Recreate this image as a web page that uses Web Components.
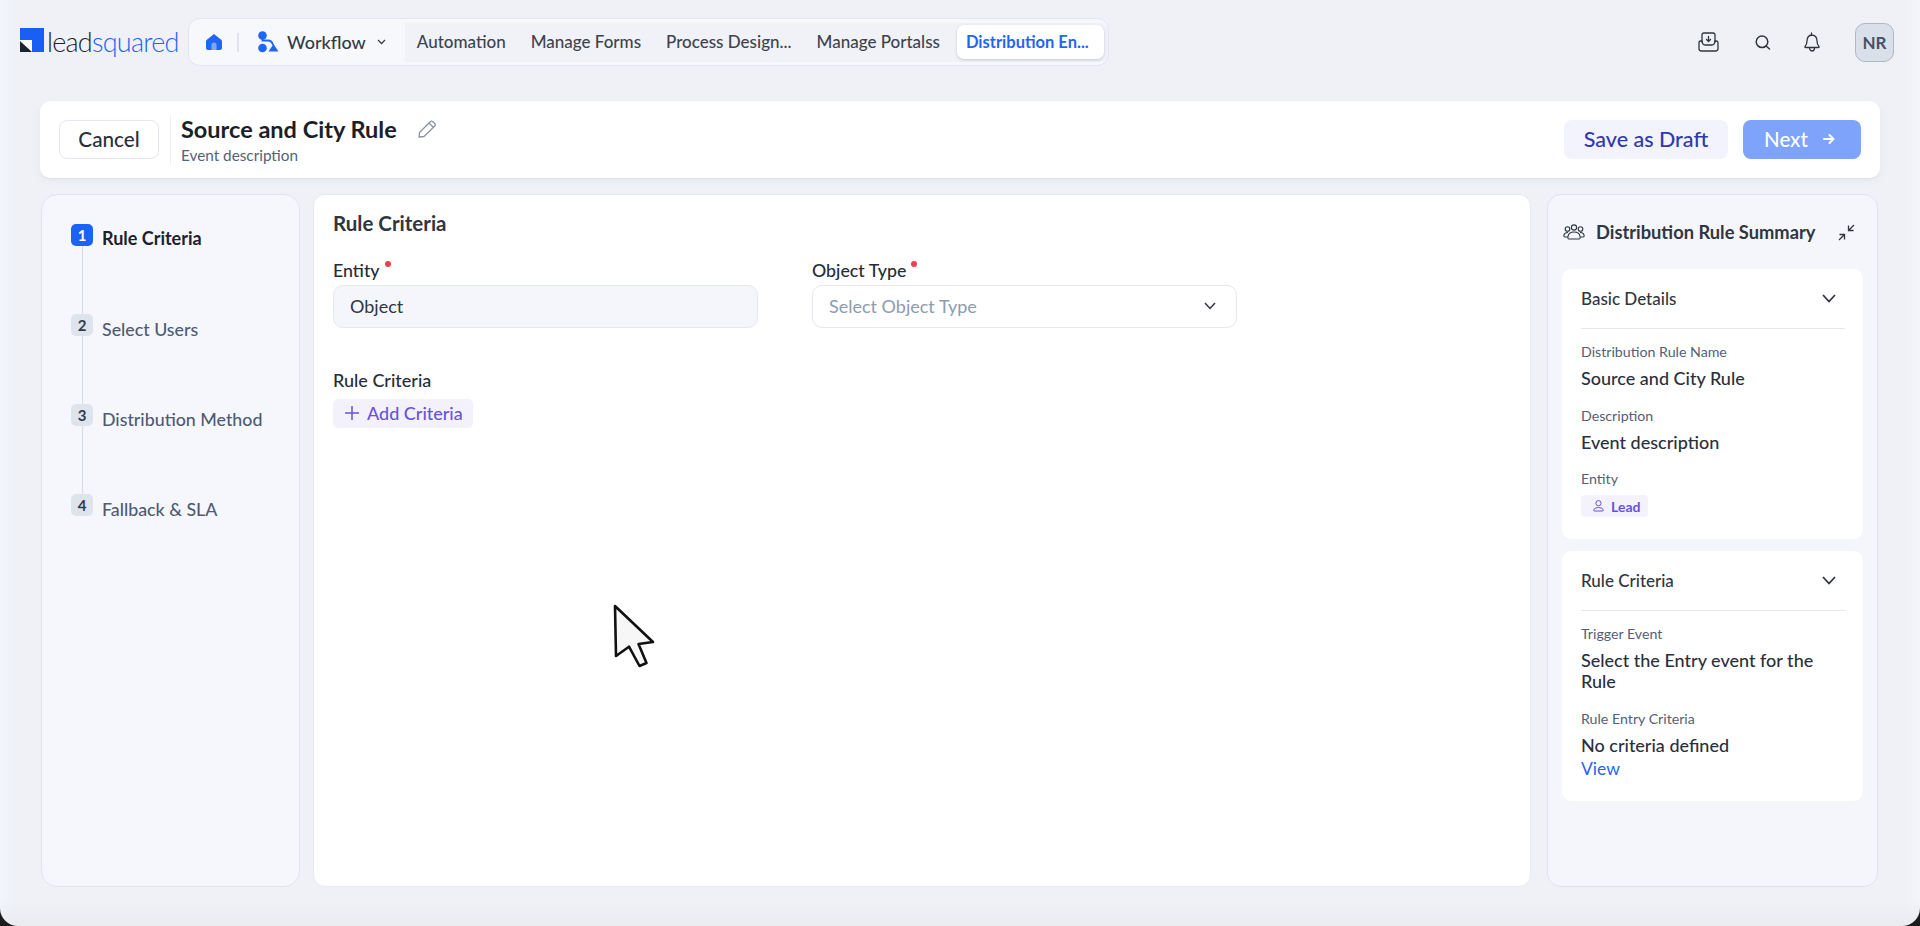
<!DOCTYPE html>
<html>
<head>
<meta charset="utf-8">
<title>Source and City Rule</title>
<style>
    html, body { margin: 0; padding: 0; background: #1c1c1e; }
    body { font-family: Lato, "Open Sans", sans-serif; width: 1920px; height: 926px; overflow: hidden; }
</style>
</head>
<body>
<ls-app>
    <ls-topbar slot="top">
        <ls-nav-tab>Automation</ls-nav-tab>
        <ls-nav-tab>Manage Forms</ls-nav-tab>
        <ls-nav-tab>Process Design...</ls-nav-tab>
        <ls-nav-tab>Manage Portalss</ls-nav-tab>
        <ls-nav-tab active>Distribution En...</ls-nav-tab>
    </ls-topbar>
    <ls-actionbar slot="top" name="Source and City Rule" description="Event description"></ls-actionbar>

    <ls-stepper>
        <ls-step number="1" active>Rule Criteria</ls-step>
        <ls-step number="2">Select Users</ls-step>
        <ls-step number="3">Distribution Method</ls-step>
        <ls-step number="4" last>Fallback &amp; SLA</ls-step>
    </ls-stepper>

    <ls-form-panel></ls-form-panel>

    <ls-summary>
        <ls-summary-card heading="Basic Details">
            <ls-detail label="Distribution Rule Name">Source and City Rule</ls-detail>
            <ls-detail label="Description">Event description</ls-detail>
            <ls-detail label="Entity"><ls-chip>Lead</ls-chip></ls-detail>
        </ls-summary-card>
        <ls-summary-card heading="Rule Criteria">
            <ls-detail label="Trigger Event">Select the Entry event for the Rule</ls-detail>
            <ls-detail label="Rule Entry Criteria" link="View">No criteria defined</ls-detail>
        </ls-summary-card>
    </ls-summary>
</ls-app>

<script>
const html = (source) => {
    const template = document.createElement("template");
    template.innerHTML = source;
    return template;
};

class Base extends HTMLElement {
    constructor() {
        super();
        this.attachShadow({ mode: "open" });
        this.shadowRoot.appendChild(this.constructor.template.content.cloneNode(true));
    }
}

class App extends Base {
    static template = html(`
        <style>
            :host {
                display: flex;
                flex-direction: column;
                width: 1920px;
                height: 926px;
                box-sizing: border-box;
                padding-bottom: 39px;
                border-radius: 0 0 18px 18px;
                overflow: hidden;
                position: relative;
                color: #2f3640;
                background:
                    linear-gradient(0deg, #ebecf0 0, rgba(238,240,245,0) 26px),
                    linear-gradient(90deg, #f2f5fe 0, rgba(242,245,254,0) 16px),
                    linear-gradient(270deg, #f3f5fb 0, rgba(243,245,251,0) 16px),
                    #eff1f7;
            }
            .work {
                flex: 1;
                min-height: 0;
                display: grid;
                grid-template-columns: 259px 1218px 331px;
                column-gap: 13px;
                padding: 16px 0 0 41px;
            }
            ::slotted(ls-summary) { margin-left: 3px; width: 331px; }
            svg { position: absolute; left: 612px; top: 603px; }
        </style>
        <slot name="top"></slot>
        <div class="work"><slot></slot></div>
        <svg width="46" height="66" viewBox="0 0 46 66">
            <path d="M3 3 L41 39 L26.500 41 L34.500 60 L27.500 63 L17 43.700 L4 53 Z" fill="#f7f7f7" stroke="#111" stroke-width="2.600" stroke-linejoin="round"/>
        </svg>
    `);
}

class Topbar extends Base {
    static template = html(`
        <style>
            :host {
                display: flex;
                align-items: center;
                height: 48px;
                padding: 18px 26px 0 20px;
            }
            .logo { display: flex; align-items: center; gap: 3px; width: 168px; }
            .logo svg { margin-bottom: 4px; }
            .word {
                font-size: 27px;
                font-weight: 300;
                line-height: 30px;
                letter-spacing: -0.75px;
                color: #1f2430;
                margin-top: -1px;
            }
            .word b { font-weight: 300; color: #1f66f2; }
            nav {
                display: flex;
                align-items: center;
                box-sizing: border-box;
                width: 921px;
                height: 48px;
                padding-left: 17px;
                background: #f7f8fc;
                border: 1px solid #e3e5f0;
                border-radius: 12px;
            }
            .sep { width: 2px; height: 19px; background: #e1e4ec; margin: 0 19px 0 15px; }
            .flow { font-size: 18px; font-weight: 500; color: #343a46; margin: 0 11px 0 8px; }
            .tabs {
                display: flex;
                align-items: center;
                height: 39px;
                margin-left: 19px;
                flex: 1;
                background: #f1f2f7;
                border-radius: 0 8px 8px 0;
            }
            .right { margin-left: auto; display: flex; align-items: center; }
            .avatar {
                box-sizing: border-box;
                width: 39px;
                height: 39px;
                margin-left: 35px;
                display: flex;
                align-items: center;
                justify-content: center;
                background: #d9e0e9;
                border: 1px solid #aeb8c6;
                border-radius: 10px;
                font-size: 17px;
                font-weight: 700;
                color: #475266;
            }
            .right svg { display: block; }
        </style>
        <div class="logo">
            <svg width="24" height="24" viewBox="0 0 24 24">
                <rect width="24" height="24" fill="#1a5ff5"/>
                <rect x="0" y="12" width="12" height="12" fill="#fff"/>
                <path d="M0 13 L12 24 H0 Z" fill="#1c2230"/>
            </svg>
            <span class="word">lead<b>squared</b></span>
        </div>
        <nav>
            <svg width="16" height="16" viewBox="0 0 16 16">
                <path d="M8 0 L15.500 6 Q16 6.500 16 7.500 V14 Q16 16 14 16 H2 Q0 16 0 14 V7.500 Q0 6.500 .5 6 Z" fill="#1f66f2"/>
                <path d="M5.500 16 V10.500 Q5.500 8.500 8 8.500 Q10.500 8.500 10.500 10.500 V16 Z" fill="#7da6f8"/>
            </svg>
            <span class="sep"></span>
            <svg width="21" height="22" viewBox="0 0 21 22">
                <circle cx="4.500" cy="4.500" r="4.300" fill="#1f66f2"/>
                <circle cx="4.500" cy="17" r="4.300" fill="#1f66f2"/>
                <path d="M4.500 5 V9.500 H10 Q14 9.500 15 14" fill="none" stroke="#1f66f2" stroke-width="1.800"/>
                <path d="M15.500 13 L20.500 20.500 H10.500 Z" fill="#1f66f2"/>
            </svg>
            <span class="flow">Workflow</span>
            <svg width="9" height="6" viewBox="0 0 9 6"><path d="M1 1 L4.500 4.500 L8 1" fill="none" stroke="#3a404c" stroke-width="1.300"/></svg>
            <div class="tabs"><slot></slot></div>
        </nav>
        <div class="right">
            <svg width="21" height="20" viewBox="0 0 21 20" fill="none" stroke="#2f3640" stroke-width="1.300" stroke-linejoin="round" stroke-linecap="round">
                <path d="M4 10 V3 Q4 1 6 1 H15 Q17 1 17 3 V10"/>
                <path d="M4 9 H2.500 Q1 9 1 11 V16.500 Q1 19 3.500 19 H17.500 Q20 19 20 16.500 V11 Q20 9 18.500 9 H17 Q16.500 13 14 13 H7 Q4.500 13 4 9 Z"/>
                <path d="M10.500 4.500 V9 M8.500 7.500 L10.500 9.500 L12.500 7.500"/>
            </svg>
            <svg style="margin-left:36px" width="16" height="15" viewBox="0 0 16 15" fill="none" stroke="#2f3640" stroke-width="1.500" stroke-linecap="round">
                <circle cx="7" cy="6.800" r="5.800"/><path d="M11.200 11 L14.500 14"/>
            </svg>
            <svg style="margin-left:33px" width="16" height="20" viewBox="0 0 16 20" fill="none" stroke="#2f3640" stroke-width="1.300" stroke-linejoin="round" stroke-linecap="round">
                <path d="M7.500 1 V3 M8 3 Q3 3.500 3 9 Q3 12.500 1 14.500 Q.5 15.500 2 15.500 H14 Q15.500 15.500 15 14.500 Q13 12.500 13 9 Q13 3.500 8 3 Z"/>
                <path d="M5.500 16 Q6 19 8 19 Q10.500 19 10.500 16"/>
            </svg>
            <div class="avatar">NR</div>
        </div>
    `);
}

class NavTab extends Base {
    static template = html(`
        <style>
            :host {
                display: block;
                height: 34px;
                line-height: 34px;
                padding: 0 13px 0 12px;
                font-size: 17px;
                font-weight: 500;
                color: #3d434f;
                white-space: nowrap;
            }
            :host([active]) {
                margin-left: 4px;
                padding: 0 15px 0 9px;
                background: #fff;
                border-radius: 7px;
                box-shadow: 0 1px 3px rgba(40,50,80,.22);
                color: #1f66f2;
                font-size: 16.500px;
                font-weight: 700;
            }
        </style>
        <slot></slot>
    `);
}

class Actionbar extends Base {
    static template = html(`
        <style>
            :host {
                display: flex;
                align-items: center;
                box-sizing: border-box;
                height: 77px;
                margin: 35px 40px 0;
                padding: 0 19px;
                background: #fff;
                border-radius: 10px;
                box-shadow: 0 1px 1px #dfe2ea, 0 3px 8px rgba(60,70,100,.05);
            }
            button {
                font: inherit;
                box-sizing: border-box;
                height: 39px;
                border-radius: 8px;
                border: 0;
                font-size: 21.500px;
                font-weight: 500;
                padding: 0 0 2px;
            }
            .cancel { width: 100px; background: #fff; border: 1px solid #e4e6ee; color: #2a303c; font-size: 20.700px; }
            .sep { width: 1px; height: 50px; background: #eceef3; margin: 0 10px 0 11px; }
            .title { display: flex; flex-direction: column; padding-top: 1px; }
            .name { display: flex; align-items: center; font-size: 23.500px; font-weight: 700; line-height: 26px; color: #1b1f28; }
            .name svg { margin-left: 21px; }
            .desc { font-size: 15.300px; line-height: 18px; color: #566278; margin-top: 4px; }
            .save { width: 164px; margin-left: auto; background: #f2f3fc; color: #3038b0; }
            .next {
                width: 118px;
                margin-left: 15px;
                padding-left: 21px;
                background: #7da3fb;
                color: #fff;
                font-size: 20.500px;
                display: flex;
                align-items: center;
                gap: 15px;
            }
        </style>
        <button class="cancel">Cancel</button>
        <span class="sep"></span>
        <div class="title">
            <div class="name"><span id="name"></span>
                <svg width="19" height="18" viewBox="0 0 19 18" fill="none" stroke="#8b93a3" stroke-width="1.300" stroke-linejoin="round">
                    <path d="M1.500 12.500 L12.500 1.500 Q13.500 .8 14.500 1.500 L17 3.800 Q17.800 4.800 17 5.800 L6 16.500 L1 17 Z"/>
                    <path d="M11 3 L15.500 7.500"/>
                </svg>
            </div>
            <div class="desc" id="desc"></div>
        </div>
        <button class="save">Save as Draft</button>
        <button class="next">Next
            <svg width="12" height="12" viewBox="0 0 12 12" fill="none" stroke="#fff" stroke-width="2" stroke-linecap="round" stroke-linejoin="round"><path d="M1 6 H10.500 M6.500 2 L10.500 6 L6.500 10"/></svg>
        </button>
    `);

    connectedCallback() {
        this.shadowRoot.querySelector("#name").textContent = this.getAttribute("name");
        this.shadowRoot.querySelector("#desc").textContent = this.getAttribute("description");
    }
}

class Stepper extends Base {
    static template = html(`
        <style>
            :host {
                display: block;
                box-sizing: border-box;
                padding: 29px 0 0 29px;
                background: #f6f7fc;
                border: 1px solid #dfe4ee;
                border-radius: 16px;
            }
        </style>
        <slot></slot>
    `);
}

class Step extends Base {
    static template = html(`
        <style>
            :host { display: flex; height: 90px; gap: 9px; }
            .rail { width: 22px; display: flex; flex-direction: column; align-items: center; }
            .badge {
                flex: none;
                width: 22px;
                height: 22px;
                border-radius: 5px;
                display: flex;
                align-items: center;
                justify-content: center;
                background: #dde4ec;
                color: #343b48;
                font-size: 15px;
                font-weight: 700;
            }
            .line { flex: 1; width: 1px; background: #d6dce5; }
            .label { margin-top: 3px; line-height: 24px; font-size: 17.800px; font-weight: 500; color: #4f5b72; white-space: nowrap; }
            :host([active]) .badge { background: #1a63f6; color: #fff; }
            :host([active]) .label { font-weight: 700; font-size: 18px; color: #1c212b; margin-top: 2px; }
            :host([last]) .line { display: none; }
        </style>
        <div class="rail"><div class="badge" id="n"></div><div class="line"></div></div>
        <div class="label"><slot></slot></div>
    `);

    connectedCallback() {
        this.shadowRoot.querySelector("#n").textContent = this.getAttribute("number");
    }
}

class FormPanel extends Base {
    static template = html(`
        <style>
            :host {
                display: block;
                box-sizing: border-box;
                padding: 16px 19px;
                background: #fff;
                border: 1px solid #e6e9f1;
                border-radius: 12px;
            }
            h2 { margin: 0 0 24px; font-size: 20.500px; line-height: 24px; font-weight: 700; color: #2f3640; }
            .row { display: flex; gap: 54px; }
            .gap { height: 41px; }
            .label { font-size: 18px; line-height: 22px; font-weight: 500; color: #262c37; }
            .add {
                display: flex;
                align-items: center;
                gap: 8px;
                box-sizing: border-box;
                width: 140px;
                height: 29px;
                margin-top: 8px;
                padding: 0 0 2px 12px;
                background: #f3f2fc;
                border-radius: 5px;
                color: #6a52d8;
                font-size: 18px;
                font-weight: 500;
            }
        </style>
        <h2>Rule Criteria</h2>
        <div class="row">
            <ls-field label="Entity" value="Object" disabled></ls-field>
            <ls-field label="Object Type" placeholder="Select Object Type"></ls-field>
        </div>
        <div class="gap"></div>
        <div class="label">Rule Criteria</div>
        <div class="add">
            <svg width="14" height="14" viewBox="0 0 14 14" stroke="#6a52d8" stroke-width="1.500"><path d="M7 0 V14 M0 7 H14"/></svg>
            Add Criteria
        </div>
    `);
}

class Field extends Base {
    static template = html(`
        <style>
            :host { display: block; width: 425px; }
            .label { display: flex; font-size: 17.800px; line-height: 22px; font-weight: 500; color: #262c37; margin-bottom: 4px; }
            .dot { width: 6px; height: 6px; margin: 2px 0 0 5px; border-radius: 50%; background: #ef3f4f; }
            .box {
                display: flex;
                align-items: center;
                justify-content: space-between;
                box-sizing: border-box;
                height: 43px;
                padding: 0 20px 2px 16px;
                background: #fff;
                border: 1px solid #e5e7ef;
                border-radius: 10px;
                font-size: 18px;
                color: #8e9bb0;
            }
            :host([disabled]) .box { background: #f5f6fb; color: #2f3640; }
            :host([disabled]) svg { display: none; }
        </style>
        <div class="label"><span id="l"></span><span class="dot"></span></div>
        <div class="box"><span id="v"></span>
            <svg width="12" height="8" viewBox="0 0 12 8" fill="none" stroke="#2f3640" stroke-width="1.500"><path d="M1 1 L6 6.500 L11 1"/></svg>
        </div>
    `);

    connectedCallback() {
        this.shadowRoot.querySelector("#l").textContent = this.getAttribute("label");
        this.shadowRoot.querySelector("#v").textContent = this.getAttribute("value") || this.getAttribute("placeholder");
    }
}

class Summary extends Base {
    static template = html(`
        <style>
            :host {
                display: block;
                box-sizing: border-box;
                padding: 25px 14px 0;
                background: #f5f6fb;
                border: 1px solid #dfe3ec;
                border-radius: 14px;
            }
            header { display: flex; align-items: center; height: 24px; margin: 0 8px 25px 1px; font-size: 18.300px; font-weight: 700; color: #2f3640; }
            header span { margin-left: 11px; flex: 1; white-space: nowrap; }
        </style>
        <header>
            <svg width="22" height="16" viewBox="0 0 22 16" fill="none" stroke="#2f3640" stroke-width="1.100" stroke-linejoin="round">
                <circle cx="11" cy="3.500" r="2.600"/><circle cx="4.500" cy="5" r="2.300"/><circle cx="17.500" cy="5" r="2.300"/>
                <path d="M6 15 H16 Q17.500 15 17 12.500 Q16.500 8 11 8 Q5.500 8 5 12.500 Q4.500 15 6 15 Z"/>
                <path d="M5 13 H2 Q.5 13 1 11 Q1.500 8.500 5 8.500 M17 13 H20 Q21.500 13 21 11 Q20.500 8.500 17 8.500"/>
            </svg>
            <span>Distribution Rule Summary</span>
            <svg width="17" height="17" viewBox="0 0 17 17" fill="none" stroke="#2f3640" stroke-width="1.300">
                <path d="M16 1 L10.500 6.500 M10.500 1.500 V6.500 H15.500 M1 16 L6.500 10.500 M1.500 10.500 H6.500 V15.500"/>
            </svg>
        </header>
        <slot></slot>
    `);
}

class SummaryCard extends Base {
    static template = html(`
        <style>
            :host {
                display: block;
                box-sizing: border-box;
                padding: 18px 18px 22px 19px;
                margin-bottom: 12px;
                background: #fff;
                border-radius: 9px;
            }
            .head {
                display: flex;
                align-items: center;
                justify-content: space-between;
                height: 22px;
                padding-bottom: 19px;
                border-bottom: 1px solid #e6e8ee;
                margin-bottom: 14px;
                font-size: 17px;
                font-weight: 500;
                color: #2f3640;
            }
            svg { margin-right: 9px; }
        </style>
        <div class="head"><span id="h"></span>
            <svg width="14" height="9" viewBox="0 0 14 9" fill="none" stroke="#2f3640" stroke-width="1.800"><path d="M1 1 L7 7.500 L13 1"/></svg>
        </div>
        <slot></slot>
    `);

    connectedCallback() {
        this.shadowRoot.querySelector("#h").textContent = this.getAttribute("heading");
    }
}

class Detail extends Base {
    static template = html(`
        <style>
            :host { display: block; margin-bottom: 17.500px; }
            :host(:last-child) { margin-bottom: 0; }
            .label { font-size: 14.200px; line-height: 18px; color: #536079; margin-bottom: 7px; }
            .value { font-size: 18px; line-height: 21px; font-weight: 500; color: #2a303c; }
            .link { font-size: 17.500px; line-height: 21px; color: #1f66f2; margin-top: 2px; }
        </style>
        <div class="label" id="l"></div>
        <div class="value"><slot></slot></div>
        <div class="link" id="a"></div>
    `);

    connectedCallback() {
        this.shadowRoot.querySelector("#l").textContent = this.getAttribute("label");
        const link = this.shadowRoot.querySelector("#a");
        if (this.hasAttribute("link")) link.textContent = this.getAttribute("link");
        else link.remove();
    }
}

class Chip extends Base {
    static template = html(`
        <style>
            :host {
                display: inline-flex;
                align-items: center;
                gap: 7px;
                box-sizing: border-box;
                width: 67px;
                height: 22px;
                padding-left: 12px;
                background: #f4f2fc;
                border-radius: 4px;
                font-size: 14px;
                font-weight: 700;
                color: #6a52d8;
                vertical-align: top;
            }
        </style>
        <svg width="11" height="12" viewBox="0 0 11 12" fill="none" stroke="#6a52d8" stroke-width="1">
            <circle cx="5.500" cy="3.200" r="2.600"/>
            <path d="M1.500 11 H9.500 Q10.500 11 10.300 10 Q9.800 7.500 5.500 7.500 Q1.200 7.500 .7 10 Q.5 11 1.500 11 Z"/>
        </svg>
        <slot></slot>
    `);
}

customElements.define("ls-app", App);
customElements.define("ls-topbar", Topbar);
customElements.define("ls-nav-tab", NavTab);
customElements.define("ls-actionbar", Actionbar);
customElements.define("ls-stepper", Stepper);
customElements.define("ls-step", Step);
customElements.define("ls-form-panel", FormPanel);
customElements.define("ls-field", Field);
customElements.define("ls-summary", Summary);
customElements.define("ls-summary-card", SummaryCard);
customElements.define("ls-detail", Detail);
customElements.define("ls-chip", Chip);
</script>
</body>
</html>
